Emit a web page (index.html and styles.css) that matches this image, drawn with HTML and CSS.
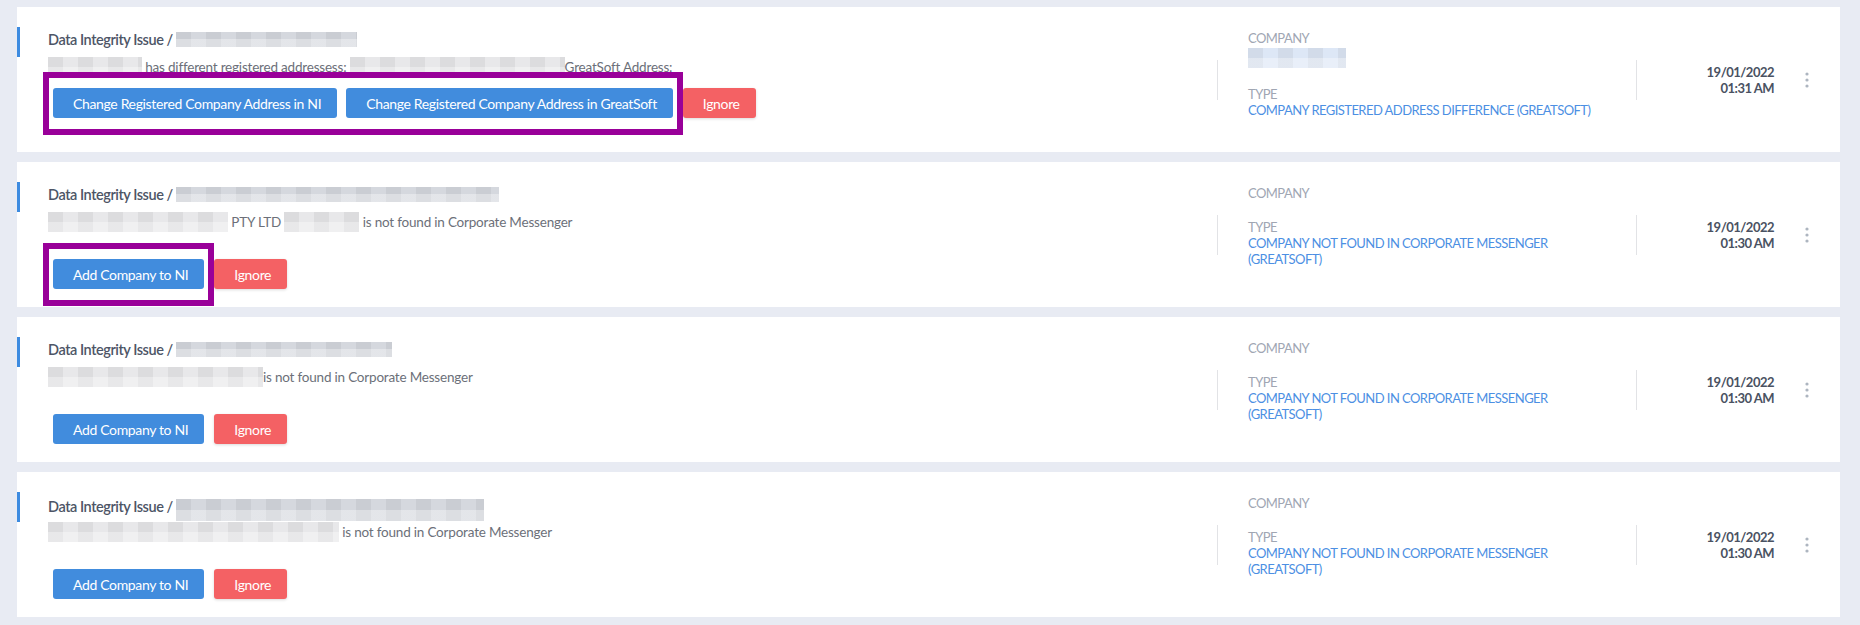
FILE: index.html
```html
<!DOCTYPE html>
<html lang="en">
<head>
  <meta charset="UTF-8" />
  <title>Data Integrity Issues</title>
  <link rel="stylesheet" href="styles.css">
</head>
<body>
  <div class="issue-list">

    <div class="issue-card">
      <div class="issue-main">
        <h3 class="issue-title">Data Integrity Issue / <span class="blur blur-title" style="width:181px"></span></h3>
        <p class="issue-desc"><span class="blur blur-text" style="width:94px"></span> has different registered addressess: <span class="blur blur-text" style="width:215px"></span>GreatSoft Address:</p>
        <div class="actions actions-tight">
          <div class="highlight">
            <button class="btn btn-primary">Change Registered Company Address in NI</button>
            <button class="btn btn-primary">Change Registered Company Address in GreatSoft</button>
          </div>
          <button class="btn btn-danger">Ignore</button>
        </div>
      </div>
      <div class="divider"></div>
      <div class="issue-meta">
        <div class="meta-group">
          <span class="meta-label">COMPANY</span>
          <span class="meta-value"><span class="blur blur-company" style="width:98px"></span></span>
        </div>
        <div class="meta-group">
          <span class="meta-label">TYPE</span>
          <span class="meta-value type">COMPANY REGISTERED ADDRESS DIFFERENCE (GREATSOFT)</span>
        </div>
      </div>
      <div class="divider"></div>
      <div class="issue-date">19/01/2022<br>01:31 AM</div>
      <div class="kebab">
        <svg width="4" height="16" viewBox="0 0 4 16"><circle cx="2" cy="2" r="1.6"/><circle cx="2" cy="8" r="1.6"/><circle cx="2" cy="14" r="1.6"/></svg>
      </div>
    </div>

    <div class="issue-card">
      <div class="issue-main">
        <h3 class="issue-title">Data Integrity Issue / <span class="blur blur-title" style="width:323px"></span></h3>
        <p class="issue-desc"><span class="blur blur-text" style="width:180px"></span> PTY LTD <span class="blur blur-text" style="width:75px"></span> is not found in Corporate Messenger</p>
        <div class="actions">
          <div class="highlight">
            <button class="btn btn-primary">Add Company to NI</button>
          </div>
          <button class="btn btn-danger">Ignore</button>
        </div>
      </div>
      <div class="divider"></div>
      <div class="issue-meta">
        <div class="meta-group">
          <span class="meta-label">COMPANY</span>
        </div>
        <div class="meta-group">
          <span class="meta-label">TYPE</span>
          <span class="meta-value type">COMPANY NOT FOUND IN CORPORATE MESSENGER (GREATSOFT)</span>
        </div>
      </div>
      <div class="divider"></div>
      <div class="issue-date">19/01/2022<br>01:30 AM</div>
      <div class="kebab">
        <svg width="4" height="16" viewBox="0 0 4 16"><circle cx="2" cy="2" r="1.6"/><circle cx="2" cy="8" r="1.6"/><circle cx="2" cy="14" r="1.6"/></svg>
      </div>
    </div>

    <div class="issue-card">
      <div class="issue-main">
        <h3 class="issue-title">Data Integrity Issue / <span class="blur blur-title" style="width:216px"></span></h3>
        <p class="issue-desc"><span class="blur blur-text" style="width:215px"></span>is not found in Corporate Messenger</p>
        <div class="actions">
          <button class="btn btn-primary">Add Company to NI</button>
          <button class="btn btn-danger">Ignore</button>
        </div>
      </div>
      <div class="divider"></div>
      <div class="issue-meta">
        <div class="meta-group">
          <span class="meta-label">COMPANY</span>
        </div>
        <div class="meta-group">
          <span class="meta-label">TYPE</span>
          <span class="meta-value type">COMPANY NOT FOUND IN CORPORATE MESSENGER (GREATSOFT)</span>
        </div>
      </div>
      <div class="divider"></div>
      <div class="issue-date">19/01/2022<br>01:30 AM</div>
      <div class="kebab">
        <svg width="4" height="16" viewBox="0 0 4 16"><circle cx="2" cy="2" r="1.6"/><circle cx="2" cy="8" r="1.6"/><circle cx="2" cy="14" r="1.6"/></svg>
      </div>
    </div>

    <div class="issue-card">
      <div class="issue-main">
        <h3 class="issue-title">Data Integrity Issue / <span class="blur blur-title blur-tall" style="width:308px"></span></h3>
        <p class="issue-desc"><span class="blur blur-text" style="width:291px"></span> is not found in Corporate Messenger</p>
        <div class="actions">
          <button class="btn btn-primary">Add Company to NI</button>
          <button class="btn btn-danger">Ignore</button>
        </div>
      </div>
      <div class="divider"></div>
      <div class="issue-meta">
        <div class="meta-group">
          <span class="meta-label">COMPANY</span>
        </div>
        <div class="meta-group">
          <span class="meta-label">TYPE</span>
          <span class="meta-value type">COMPANY NOT FOUND IN CORPORATE MESSENGER (GREATSOFT)</span>
        </div>
      </div>
      <div class="divider"></div>
      <div class="issue-date">19/01/2022<br>01:30 AM</div>
      <div class="kebab">
        <svg width="4" height="16" viewBox="0 0 4 16"><circle cx="2" cy="2" r="1.6"/><circle cx="2" cy="8" r="1.6"/><circle cx="2" cy="14" r="1.6"/></svg>
      </div>
    </div>

  </div>
</body>
</html>
```

FILE: styles.css
```css
body {
  font-family: Lato, 'Noto Sans', sans-serif;
  margin: 0;
  padding: 0;
  background-color: #e8ebf3;
}

.issue-list {
  display: flex;
  flex-direction: column;
  gap: 10px;
  padding: 7px 20px 8px 17px;
}

.issue-card {
  display: flex;
  background-color: white;
  height: 145px;
  box-sizing: border-box;
}

.issue-main {
  flex: 1;
  padding: 20px 0 0 0;
}

.issue-title {
  margin: 0;
  height: 30px;
  box-sizing: border-box;
  padding: 3px 0 7px 28px;
  border-left: 3px solid #3d8be0;
  font-size: 14.5px;
  line-height: 20px;
  font-weight: 600;
  letter-spacing: -0.45px;
  color: #4d5566;
}

.issue-desc {
  margin: 2px 0 0 31px;
  height: 16px;
  font-size: 13.5px;
  line-height: 16px;
  letter-spacing: -0.2px;
  color: #6c7079;
}

/* pixelated placeholders for hidden names */
.blur {
  display: inline-block;
  vertical-align: middle;
  background-image:
    linear-gradient(180deg, transparent 50%, rgba(255, 255, 255, 0.35) 50%),
    linear-gradient(90deg, rgba(0, 0, 0, 0.05) 50%, transparent 50%);
  background-size: 100% 100%, 30px 100%;
}

.blur-title {
  height: 15px;
  background-color: #d5d8de;
  margin-top: -3px;
}

.blur-tall {
  height: 22px;
  margin-top: 4px;
}

.blur-text {
  height: 20px;
  margin-top: -4px;
  background-color: #e8e8ea;
}

.blur-company {
  height: 20px;
  margin-top: 2px;
  background-color: #dde7f6;
}

.actions {
  display: flex;
  gap: 10px;
  margin: 29px 0 0 36px;
}

.actions-tight {
  margin-top: 13px;
}

.highlight {
  display: flex;
  gap: 9px;
  position: relative;
}

.highlight::after {
  content: "";
  position: absolute;
  top: -16px;
  bottom: -17px;
  left: -10px;
  right: -10px;
  border: 6px solid #990099;
  pointer-events: none;
}

.btn {
  height: 30px;
  padding: 0 16px 0 20px;
  border: none;
  border-radius: 3px;
  font-family: Lato, 'Noto Sans', sans-serif;
  font-size: 14px;
  letter-spacing: -0.35px;
  color: white;
  cursor: pointer;
}

.btn-primary {
  background-color: #418cdd;
}

.btn-danger {
  background-color: #f46164;
  box-shadow: 0 1px 3px rgba(0, 0, 0, 0.15);
}

.divider {
  align-self: center;
  width: 1px;
  height: 40px;
  background-color: #e2e3e6;
}

.issue-meta {
  width: 358px;
  padding: 23px 30px 0 30px;
}

.meta-group {
  display: flex;
  flex-direction: column;
  margin-bottom: 18px;
  font-size: 13px;
  line-height: 16px;
  letter-spacing: -0.55px;
}

.meta-label {
  color: #a0a6b3;
}

.meta-value.type {
  color: #4c8fe3;
}

.issue-date {
  align-self: center;
  width: 137px;
  text-align: right;
  font-size: 13px;
  line-height: 16px;
  font-weight: bold;
  letter-spacing: -0.5px;
  color: #4a5262;
}

.kebab {
  align-self: center;
  width: 66px;
  display: flex;
  justify-content: center;
}

.kebab svg {
  fill: #adb5c0;
}
```
